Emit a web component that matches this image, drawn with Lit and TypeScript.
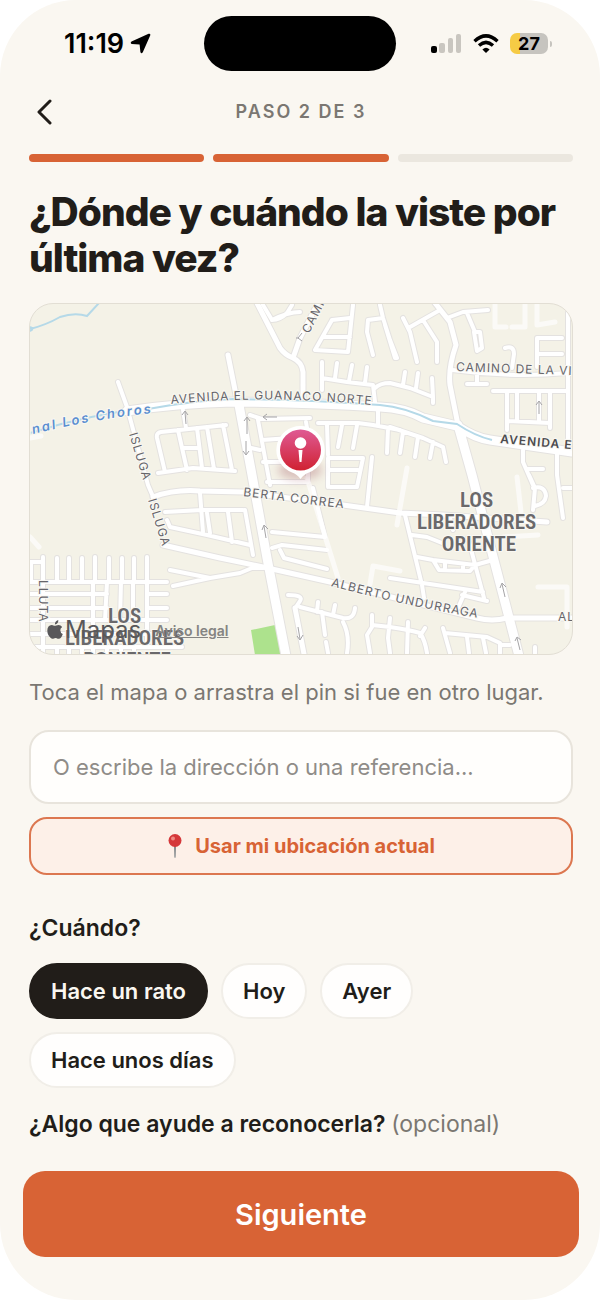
import {LitElement, html, svg, css} from 'lit';
import {customElement, property, state} from 'lit/decorators.js';
import {classMap} from 'lit/directives/class-map.js';

interface IRoadLayer {
    name: string;
    paths: string[];
}

const LAYERS: IRoadLayer[] = [
    {
        name: 'faint',
        paths: [
            'M495 305V327H506 M525 305V327H512 M537 305V325L555 322',
            'M517 477L521 512 M503 537L538 535 M407 468L397 525 M538 587H567V627',
            'M370 584L373 566L400 571 M30 537L39 547 M30 438L41 436',
            'M307 478L338 578',
        ],
    },
    {
        name: 'minor',
        paths: [
            // north, both sides of the diagonal avenue
            'M263 305L272 320Q280 320 287 313L292 305 M272 320Q288 312 300 312',
            'M332 320L350 318 M325 337H350 M332 320L315 350L348 352L353 305',
            'M380 305L383 318L390 340L397 358 M383 318L368 320L367 332L373 355',
            'M322 362V390 M322 378L347 382L373 385L375 402 M337 363L335 378 M352 365L349 381 M367 367L365 383',
            'M375 388Q380 383 390 383L410 388L433 397V403 M405 372L403 385 M418 373L416 388 M432 378L433 397',
            'M385 325L395 358 M403 318L410 332L417 362 M410 327L440 310 M423 320L437 342V362',
            'M447 318L463 312L488 310 M467 313L475 332 M474 332H480L482 348L477 351L474 332',
            'M562 338H537V367 M537 354H562 M505 348Q514 345 514 354L512 368',
            'M477 375V384 M467 384H487 M452 370Q510 378 568 373 M568 305V450',
            'M493 391H567 M507 392V430 M517 392V420 M539 392V422 M550 392V428 M508 421L550 423',
            // blocks under the canal
            'M390 427L423 438L443 447L446 462 M403 432L400 453 M418 437L415 457 M433 442L430 458',
            'M318 423H358L373 425L400 430 M378 407V425 M327 425L328 455 M342 425L338 447 M357 425L353 448 M388 428L387 453',
            'M328 458H363L357 487H330 M328 470H358 M328 458V487 M372 457L367 507',
            'M250 415L262 419L310 418 M258 420L270 485 M262 440L290 438 M247 447L260 450 M263 462H290',
            'M306 422L309 440 M267 482H308V462 M313 488L325 537L272 532',
            'M523 450V462L533 485 M527 469H543 M557 453V475L563 518 M563 488H572',
            'M529 475L535 488L533 510 M533 488Q545 485 546 496Q545 504 535 506',
            // the enclosed block to the west
            'M158 473L193 468L235 471 M165 472L157 438Q156 433 161 432L226 425 M178 430L187 470 M197 428L202 468 M207 427L214 469 M223 425L232 470 M183 448H198 M183 410L186 428',
            'M118 382L127 407L148 485L154 499',
            'M165 512L202 510H243 M167 520L170 527L207 535L250 545 M200 493L203 532 M207 513L210 533',
            'M228 512L232 542 M245 510L253 555',
            'M170 570L210 578 M173 586L210 578L240 573L252 568H263',
            'M272 548L282 545L327 550 M280 550L284 558L327 569',
            // south centre
            'M288 595Q304 595 300 601L296 607 M300 607L343 618Q354 620 355 608 M318 602L317 612 M335 605L333 615',
            'M322 612L325 635 M326 642L328 653 M343 622Q350 635 347 653',
            'M372 615V627L367 635L370 653 M372 625L390 627Q410 630 420 633Q425 640 427 653 M390 618L388 638L390 653 M408 622L407 653 M425 628L420 636',
            'M443 628L450 653 M445 633L487 637L500 643V653 M500 645H510 M467 637L469 653 M483 638L486 653 M535 647V653',
            'M405 515L422 585L424 598 M412 535L427 537L442 543 M417 557L433 560L475 565L493 560 M433 560L439 570L470 571L475 565 M445 562V568 M463 566V570',
            'M468 538L484 598 M390 578L483 592 M462 595L487 601 M465 592L458 608 M450 518L453 530',
            // south-west grid
            'M30 582H167 M30 594H92 M95 594H107 M30 608H107 M30 620H107 M147 594H167 M147 608H167 M30 620H167 M30 634H167 M30 647H182 M30 562H43',
            'M43 557V653 M57 558V582 M69 558V582 M82 558V582 M95 557V582 M109 558V582 M122 558V582 M134 558V582 M147 557V647',
            'M31 562V582 M95 582H93V653 M107 582L105 620 M121 582L120 620 M133 582V620 M57 647V653 M69 647V653 M82 647V653 M107 647V653 M121 647V653 M134 647V653',
        ],
    },
    {
        name: 'medium',
        paths: [
            'M228 355L237 400 M257 303L280 348Q285 355 293 358Q302 362 303 372V400 M293 358L300 338L318 303',
            'M435 303L450 322L456 345Q448 368 450 385L458 425',
            'M153 497Q175 489 200 491L243 492L343 505L400 513L443 515L547 522',
            'M163 545L220 558L263 567L330 582L477 618Q492 622 507 618H572',
            'M295 608L304 654',
        ],
    },
    {
        name: 'major',
        paths: [
            'M127 411Q180 403 233 402Q310 403 380 407Q405 408 423 418L457 426Q475 438 490 440L572 452',
            'M239 405L252 475L267 558L286 656',
            'M458 425L472 475L490 545L519 656',
        ],
    },
];

const ARROWS = [
    'M247 434V418M244 421L247 417L250 421',
    'M246 441V454M243 451L246 455L249 451',
    'M186 424L185 412M182 415L185 411L188 415',
    'M277 417H264M267 414L263 417L267 420',
    'M299 338H296M302 333L298 338L302 341',
    'M539 414V402M536 405L539 401L542 405',
    'M266 538L264 526M262 530L264 525L268 529',
    'M298 627L300 639M297 636L300 640L303 635',
    'M505 597L502 584M500 588L502 583L506 587',
    'M520 650L517 638M515 641L517 637L521 640',
];

@customElement('status-bar')
export class StatusBar extends LitElement {
    static override styles = css`
        :host {
            display: grid;
            grid-template-columns: 1fr auto 1fr;
            align-items: center;
            padding: 16px 48px 0;
            color: #000;
        }

        .clock {
            display: flex;
            align-items: center;
            gap: 6px;
            padding-left: 16px;
            font-size: 27px;
            line-height: 32px;
            font-weight: 600;
        }

        .island {
            width: 192px;
            height: 55px;
            border-radius: 28px;
            background: #000;
        }

        .signals {
            display: flex;
            align-items: center;
            justify-content: flex-end;
            gap: 11px;
        }

        .battery {
            display: flex;
            align-items: center;
            gap: 2px;
        }

        .cell {
            width: 38px;
            line-height: 21px;
            border-radius: 7px;
            background: linear-gradient(90deg, #f6cb45 27%, #c6c4bf 27%);
            font-size: 18px;
            font-weight: 700;
            text-align: center;
        }

        .cap {
            width: 2px;
            height: 6px;
            border-radius: 0 2px 2px 0;
            background: #c6c4bf;
        }
    `

    override render() {
        return html`
            <div class="clock">
                <span>11:19</span>
                <svg width="21" height="21" viewBox="0 0 21 21" aria-hidden="true">
                    <path d="M18.600.8L1.500 8.400Q-.2 9.900 1.800 10.900L9.600 11.400L10.400 19Q11.200 21.200 12.800 19.300L20.300 2.300Q20.600.2 18.600.8Z"/>
                </svg>
            </div>
            <div class="island"></div>
            <div class="signals">
                <svg width="31" height="20" viewBox="0 0 31 20" aria-hidden="true">
                    <rect x="0" y="12" width="6" height="7" rx="2"/>
                    <g fill="#c9c6c0">
                        <rect x="8" y="9" width="6" height="10" rx="2"/>
                        <rect x="17" y="4" width="5" height="15" rx="2"/>
                        <rect x="25" y="0" width="5" height="19" rx="2"/>
                    </g>
                </svg>
                <svg width="26" height="20" viewBox="0 0 26 20" fill="none" stroke="#000" stroke-width="3.4" aria-hidden="true">
                    <path d="M1.500 7.200Q13-3.400 24.500 7.200M6 11.600Q13 5.200 20 11.600"/>
                    <path d="M13 19L9.400 15.400Q13 12.200 16.600 15.400Z" fill="#000" stroke="none"/>
                </svg>
                <div class="battery">
                    <div class="cell">27</div>
                    <div class="cap"></div>
                </div>
            </div>
        `;
    }
}

@customElement('place-map')
export class PlaceMap extends LitElement {
    static override styles = css`
        :host {
            display: block;
            position: relative;
            overflow: hidden;
            border: 1px solid #e2ded4;
            border-radius: 24px;
            background: #f4f2e7;
        }

        .canvas {
            display: block;
            width: 100%;
            height: auto;
        }

        .casing, .fill {
            fill: none;
            stroke-linecap: round;
            stroke-linejoin: round;
        }

        .casing { stroke: #e4e2e0; }
        .fill { stroke: #fff; }
        .casing.faint { stroke: none; }
        .fill.faint { stroke: #fbfaf7; stroke-width: 5px; }
        .casing.minor { stroke-width: 6px; }
        .fill.minor { stroke-width: 4px; }
        .casing.medium { stroke-width: 7px; }
        .fill.medium { stroke-width: 5px; }
        .casing.major { stroke-width: 11px; }
        .fill.major { stroke-width: 9px; }

        .water {
            fill: none;
            stroke: #b5d9e8;
            stroke-width: 2px;
        }

        .arrow {
            fill: none;
            stroke: #a5a4a6;
            stroke-width: 1px;
        }

        .guide { fill: none; }

        .street {
            fill: #66656a;
            font-size: 12px;
            letter-spacing: 1px;
            stroke: #f9f8f3;
            stroke-width: 2px;
            paint-order: stroke;
        }

        .avenue {
            fill: #4c4b4e;
            font-weight: 600;
        }

        .canal {
            fill: #5b8fd0;
            font-size: 13px;
            font-weight: 600;
            font-style: italic;
            letter-spacing: 2px;
        }

        .district {
            fill: #6a696b;
            font-family: 'Liberation Sans Narrow', 'Roboto Condensed', Roboto, sans-serif;
            font-size: 21px;
            font-weight: 600;
            text-anchor: middle;
            stroke: #f9f8f3;
            stroke-width: 2px;
            paint-order: stroke;
        }

        .credits {
            position: absolute;
            left: 17px;
            bottom: 10px;
            display: flex;
            align-items: center;
            gap: 14px;
            color: #59585a;
        }

        .brand {
            display: flex;
            align-items: center;
            gap: 2px;
            font-size: 24px;
            line-height: 28px;
        }

        .legal {
            color: #858482;
            font-size: 14px;
            font-weight: 600;
        }
    `

    override render() {
        return html`
            <svg class="canvas" viewBox="30 304 542 350" role="img" aria-label="Mapa">
                <defs>
                    <linearGradient id="pin-fill" x2="0" y2="1">
                        <stop offset="0" stop-color="#df5a94"/>
                        <stop offset="1" stop-color="#d02232"/>
                    </linearGradient>
                    <filter id="pin-shadow" x="-50%" y="-50%" width="200%" height="200%">
                        <feGaussianBlur stdDeviation="4"/>
                    </filter>
                </defs>
                <path d="M251 630L275 625L282 655H255Z" fill="#ade28d"/>
                <path class="water" d="M30 329Q46 325 60 317Q75 312 87 316L99 303M30 327Q35 329 30 331M30 433Q90 414 150 408"/>
                ${LAYERS.map(l => svg`<path class="casing ${l.name}" d=${l.paths.join(' ')}/>`)}
                ${LAYERS.map(l => svg`<path class="fill ${l.name}" d=${l.paths.join(' ')}/>`)}
                <path class="water" d="M148 409Q190 401 233 399Q310 400 380 405Q405 407 433 421L457 424Q475 436 492 440"/>
                ${ARROWS.map(d => svg`<path class="arrow" d=${d}/>`)}

                <path id="guanaco" class="guide" d="M171 404Q270 394 380 406"/>
                <path id="choros" class="guide" d="M0 443Q80 420 153 413"/>
                <path id="undurraga" class="guide" d="M331 586Q400 605 490 620"/>
                <text class="street"><textPath href="#guanaco">AVENIDA EL GUANACO NORTE</textPath></text>
                <text class="street canal" text-anchor="end"><textPath href="#choros" startOffset="100%">Canal Los Choros</textPath></text>
                <text class="street"><textPath href="#undurraga">ALBERTO UNDURRAGA</textPath></text>
                <text class="street" transform="translate(129 434) rotate(73)">ISLUGA</text>
                <text class="street" transform="translate(148 500) rotate(73)">ISLUGA</text>
                <text class="street" transform="translate(309 334) rotate(-63)">CAMINO</text>
                <text class="street" transform="translate(456 371) rotate(2)">CAMINO DE LA VIÑA</text>
                <text class="street avenue" transform="translate(500 443) rotate(5)">AVENIDA EL</text>
                <text class="street" transform="translate(243 496) rotate(7)">BERTA CORREA</text>
                <text class="street" transform="translate(39 580) rotate(90)">LLUTA</text>
                <text class="street" x="558" y="621">ALBERTO</text>
                <text class="district">
                    <tspan x="479" y="507">LOS</tspan>
                    <tspan x="479" y="529">LIBERADORES</tspan>
                    <tspan x="479" y="551">ORIENTE</tspan>
                </text>
                <text class="district">
                    <tspan x="127" y="623">LOS</tspan>
                    <tspan x="127" y="645">LIBERADORES</tspan>
                    <tspan x="127" y="667">PONIENTE</tspan>
                </text>

                <ellipse cx="300" cy="470" rx="22" ry="10" fill="#8b3040" opacity=".25" filter="url(#pin-shadow)"/>
                <path d="M300.500 426A24 24 0 0 1 309 472.500Q304 474 300.500 479Q297 474 292 472.500A24 24 0 0 1 300.500 426Z" fill="#fff"/>
                <circle cx="300.500" cy="450" r="20.500" fill="url(#pin-fill)"/>
                <circle cx="300.500" cy="443" r="5.800" fill="#fff"/>
                <path d="M298.500 450H302.500L301.500 462H299.500Z" fill="#fff"/>
            </svg>
            <div class="credits">
                <div class="brand">
                    <svg width="16" height="20" viewBox="0 0 16 20" fill="currentColor" aria-hidden="true">
                        <path d="M11.300 0Q11.500 3.800 7.900 4.600Q7.700 1.200 11.300 0ZM15.200 6.900Q13.200 8 13.300 10.200Q13.400 13 15.800 13.900Q14.300 18.400 11.800 18.800Q10.700 18.900 9.700 18.300Q8.300 17.700 6.900 18.400Q5.300 19.200 4 18.300Q.3 14.800.3 10.400Q.5 5.600 4.700 5.100Q5.900 5.100 7 5.700Q8 6.100 9.200 5.500Q13 4.100 15.200 6.900Z"/>
                    </svg>
                    <span>Mapas</span>
                </div>
                <a class="legal" href="#legal">Aviso legal</a>
            </div>
        `;
    }
}

@customElement('step-header')
export class StepHeader extends LitElement {
    @property({type: Number}) step = 1;
    @property({type: Number}) total = 3;

    static override styles = css`
        .nav {
            display: grid;
            grid-template-columns: 32px 1fr 32px;
            align-items: center;
            height: 32px;
        }

        .back {
            display: flex;
            align-items: center;
            justify-content: center;
            height: 32px;
            padding: 0;
            border: 0;
            background: none;
            color: #211d19;
        }

        .title {
            color: #7b7772;
            font-size: 18px;
            line-height: 24px;
            font-weight: 600;
            letter-spacing: 2px;
            text-align: center;
        }

        .bars {
            display: flex;
            gap: 9px;
            margin-top: 26px;
        }

        .bar {
            flex: 1;
            height: 8px;
            border-radius: 4px;
            background: #ebe7df;
        }

        .bar.done {
            background: #d86335;
        }
    `

    override render() {
        const steps = Array.from({length: this.total}, (_, i) => i + 1);
        return html`
            <div class="nav">
                <button class="back" aria-label="Volver">
                    <svg width="18" height="26" viewBox="0 0 18 26" fill="none" stroke="currentColor" stroke-width="3" stroke-linecap="round" stroke-linejoin="round">
                        <path d="M14 2L3 13L14 24"/>
                    </svg>
                </button>
                <div class="title">PASO ${this.step} DE ${this.total}</div>
            </div>
            <div class="bars">
                ${steps.map(s => html`<div class=${classMap({bar: true, done: s <= this.step})}></div>`)}
            </div>
        `;
    }
}

@customElement('app-root')
export class AppRoot extends LitElement {
    @state() private when = 'Hace un rato';

    private options = ['Hace un rato', 'Hoy', 'Ayer', 'Hace unos días'];

    static override styles = css`
        :host {
            display: block;
            background: #fff;
            color: #211d19;
            font-family: Inter, 'Liberation Sans', sans-serif;
        }

        * {
            box-sizing: border-box;
        }

        button, input {
            font-family: inherit;
            color: inherit;
        }

        .screen {
            display: flex;
            flex-direction: column;
            min-height: 100vh;
            border-radius: 76px;
            background: #faf7f1;
        }

        .content {
            flex: 1;
            display: flex;
            flex-direction: column;
            padding: 25px 27px 0 29px;
        }

        .heading {
            margin: 27px 0 22px;
            font-size: 39px;
            line-height: 46px;
            font-weight: 800;
            letter-spacing: -1px;
        }

        .hint {
            margin: 22px 0;
            color: #7b7772;
            font-size: 22px;
            line-height: 31px;
        }

        .address {
            width: 100%;
            height: 74px;
            padding: 0 22px;
            border: 2px solid #e8e4dc;
            border-radius: 20px;
            background: #fffefc;
            font-size: 22px;
        }

        .address::placeholder {
            color: #8f8c88;
            opacity: 1;
        }

        .locate {
            display: flex;
            align-items: center;
            justify-content: center;
            gap: 12px;
            height: 58px;
            margin-top: 13px;
            border: 2px solid #dc7750;
            border-radius: 18px;
            background: #fdf0e8;
            color: #d86335;
            font-size: 20px;
            font-weight: 700;
        }

        .label {
            margin: 0;
            font-size: 23px;
            line-height: 30px;
            font-weight: 600;
        }

        .when {
            margin-top: 38px;
        }

        .optional {
            color: #7b7772;
            font-weight: 400;
        }

        .chips {
            display: flex;
            flex-wrap: wrap;
            gap: 13px;
            margin: 20px 0 21px;
        }

        .chip {
            height: 56px;
            padding: 0 20px;
            border: 2px solid #f1eee8;
            border-radius: 28px;
            background: #fffefd;
            font-size: 22px;
            font-weight: 600;
        }

        .chip.selected {
            border-color: #211d19;
            background: #211d19;
            color: #faf7f1;
        }

        .footer {
            display: flex;
            padding: 31px 21px 43px 23px;
        }

        .next {
            flex: 1;
            height: 86px;
            border: 0;
            border-radius: 22px;
            background: #d86335;
            color: #fff;
            font-size: 29px;
            font-weight: 600;
        }
    `

    override render() {
        return html`
            <div class="screen">
                <status-bar></status-bar>
                <main class="content">
                    <step-header step="2" total="3"></step-header>
                    <h1 class="heading">¿Dónde y cuándo la viste por última vez?</h1>
                    <place-map></place-map>
                    <p class="hint">Toca el mapa o arrastra el pin si fue en otro lugar.</p>
                    <input class="address" type="text" aria-label="Dirección o referencia" placeholder="O escribe la dirección o una referencia...">
                    <button class="locate">
                        <svg width="16" height="26" viewBox="0 0 16 26" aria-hidden="true">
                            <path d="M7 12H9L8.600 24Q8 26 7.400 24Z" fill="#7d8488"/>
                            <circle cx="8" cy="7.500" r="6.500" fill="#d5383a"/>
                            <circle cx="6" cy="5.500" r="2" fill="#ef8b84"/>
                        </svg>
                        Usar mi ubicación actual
                    </button>
                    <h2 class="label when">¿Cuándo?</h2>
                    <div class="chips">
                        ${this.options.map(o => html`
                            <button
                                class=${classMap({chip: true, selected: o === this.when})}
                                aria-pressed=${o === this.when}
                                @click=${() => this.when = o}
                            >${o}</button>
                        `)}
                    </div>
                    <h2 class="label">¿Algo que ayude a reconocerla? <span class="optional">(opcional)</span></h2>
                </main>
                <footer class="footer">
                    <button class="next">Siguiente</button>
                </footer>
            </div>
        `;
    }
}

declare global {
    interface HTMLElementTagNameMap {
        'app-root': AppRoot;
        'status-bar': StatusBar;
        'place-map': PlaceMap;
        'step-header': StepHeader;
    }
}
